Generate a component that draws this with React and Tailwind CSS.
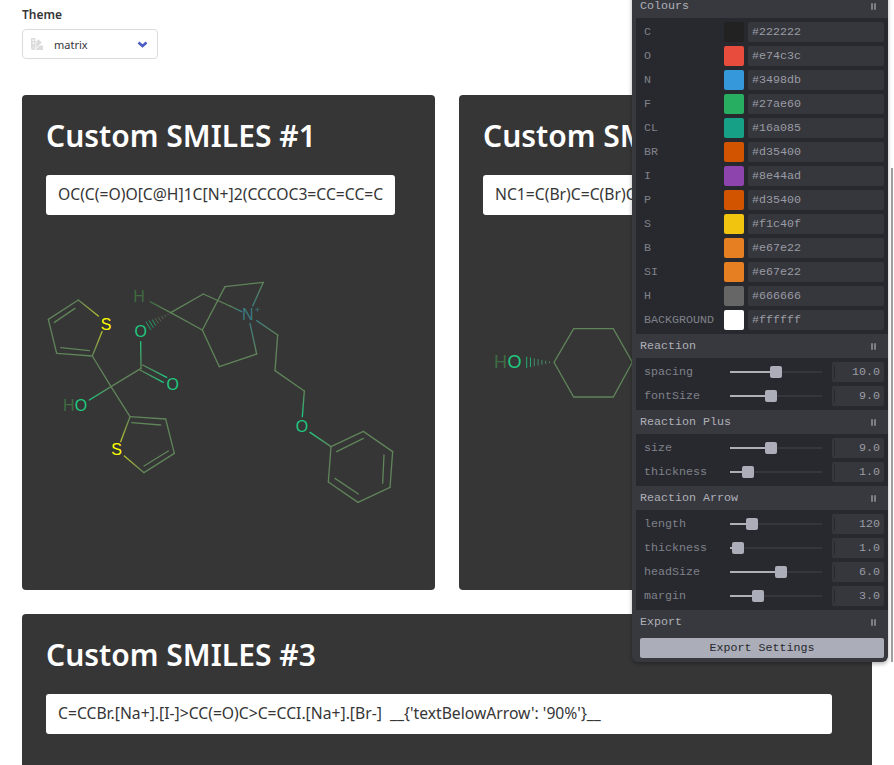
import { FaSwatchbook } from "react-icons/fa";

const sans = "font-['Noto_Sans','Open_Sans',sans-serif]";

const colours = [
  ["C", "#222222"],
  ["O", "#e74c3c"],
  ["N", "#3498db"],
  ["F", "#27ae60"],
  ["CL", "#16a085"],
  ["BR", "#d35400"],
  ["I", "#8e44ad"],
  ["P", "#d35400"],
  ["S", "#f1c40f"],
  ["B", "#e67e22"],
  ["SI", "#e67e22"],
  ["H", "#666666"],
  ["BACKGROUND", "#ffffff"],
];

const line = "#5f8459";
const oxy = "#1fc87f";
const sul = "#ffff00";
const nit = "#3c7a80";
const hyd = "#3f6b42";

// bond coordinates are in 3x picture units, the group below scales them down
function Bond({ id, d, from = line, to = line }) {
  if (from === to) return <line x1={d[0]} y1={d[1]} x2={d[2]} y2={d[3]} stroke={from} strokeWidth="4" strokeLinecap="round" />;
  return (
    <>
      <linearGradient id={id} gradientUnits="userSpaceOnUse" x1={d[0]} y1={d[1]} x2={d[2]} y2={d[3]}>
        <stop offset="0" stopColor={from} />
        <stop offset="1" stopColor={to} />
      </linearGradient>
      <line x1={d[0]} y1={d[1]} x2={d[2]} y2={d[3]} stroke={`url(#${id})`} strokeWidth="4" strokeLinecap="round" />
    </>
  );
}

function Atom({ x, y, fill, size = 48, children }) {
  return (
    <text x={x} y={y} fill={fill} fontSize={size} textAnchor="middle" dominantBaseline="central" fontFamily="'Liberation Sans', sans-serif">
      {children}
    </text>
  );
}

const plain = [
  [145, 90, 55, 148], [73, 157, 135, 115], [55, 148, 80, 250], [80, 250, 187, 258], [92, 233, 178, 242],
  [187, 258, 243, 350], [243, 350, 300, 440], [243, 350, 333, 295],
  [300, 440, 407, 447], [305, 458, 392, 465], [407, 447, 433, 550], [433, 550, 342, 608], [342, 588, 415, 543],
  [422, 128, 520, 72], [520, 72, 600, 108], [422, 128, 517, 180], [517, 180, 585, 50], [585, 50, 700, 37],
  [517, 180, 568, 290], [568, 290, 680, 252], [743, 195, 735, 302], [735, 302, 823, 363],
  [903, 530, 1000, 484], [920, 545, 1000, 505], [1000, 484, 1088, 545], [1088, 545, 1080, 652], [1062, 555, 1058, 640],
  [1080, 652, 984, 697], [984, 697, 895, 636], [915, 625, 985, 672], [895, 636, 903, 530],
];

const mixed = [
  [[187, 258, 216, 185], line, "#b5c030"],
  [[145, 90, 205, 138], line, "#b5c030"],
  [[300, 440, 272, 515], line, "#b5c030"],
  [[342, 608, 283, 558], line, "#b5c030"],
  [[243, 350, 178, 390], line, oxy],
  [[333, 295, 332, 215], line, oxy],
  [[338, 285, 410, 322], line, oxy],
  [[330, 300, 400, 337], line, oxy],
  [[422, 128, 360, 95], line, hyd],
  [[600, 108, 635, 125], line, nit],
  [[700, 37, 668, 108], line, nit],
  [[680, 252, 660, 160], line, nit],
  [[743, 195, 680, 152], line, nit],
  [[823, 363, 817, 440], line, oxy],
  [[903, 530, 840, 487], line, oxy],
];

function MoleculeOne() {
  return (
    <svg viewBox="46 255 365 310" className="mt-10 block h-[310px] w-[365px]">
      <g transform="translate(30 270) scale(0.33333)">
        {plain.map((d, i) => <Bond key={i} id={`p${i}`} d={d} />)}
        {mixed.map(([d, from, to], i) => <Bond key={i} id={`m${i}`} d={d} from={from} to={to} />)}
        {[0, 1, 2, 3, 4, 5, 6, 7].map((i) => {
          const x = 414 - i * 8.4;
          const y = 133 + i * 4.9;
          const h = 2 + i * 1.8;
          return <line key={i} x1={x - h * 0.5} y1={y - h * 0.85} x2={x + h * 0.5} y2={y + h * 0.85} stroke={i > 4 ? oxy : line} strokeWidth="2" />;
        })}
        <Atom x={228} y={163} fill={sul}>S</Atom>
        <Atom x={260} y={540} fill={sul}>S</Atom>
        <Atom x={332} y={186} fill={oxy}>O</Atom>
        <Atom x={428} y={345} fill={oxy}>O</Atom>
        <Atom x={116} y={408} fill={hyd}>H</Atom>
        <Atom x={153} y={408} fill={oxy}>O</Atom>
        <Atom x={327} y={81} fill={hyd}>H</Atom>
        <Atom x={653} y={135} fill={nit}>N</Atom>
        <Atom x={682} y={120} fill={nit} size={27}>+</Atom>
        <Atom x={816} y={470} fill={oxy}>O</Atom>
      </g>
    </svg>
  );
}

function MoleculeTwo() {
  return (
    <svg viewBox="483 255 365 310" className="mt-10 block h-[310px] w-[365px]">
      <path d="M554 362.3 573.7 328.7H613.3L632.3 362.3 613.3 397H573.7Z" fill="none" stroke={line} strokeWidth="1.3" />
      {[0, 1, 2, 3, 4, 5, 6].map((i) => {
        const x = 549.5 - i * 3.8;
        const h = 0.8 + i * 0.8;
        return <line key={i} x1={x} y1={362.3 - h} x2={x} y2={362.3 + h} stroke={i > 4 ? oxy : "#4aa070"} strokeWidth="0.8" />;
      })}
      <text x="494" y="368" fill={hyd} fontSize="18" fontFamily="'Liberation Sans', sans-serif">H</text>
      <text x="507.5" y="368" fill={oxy} fontSize="18" fontFamily="'Liberation Sans', sans-serif">O</text>
    </svg>
  );
}

function Card({ title, value, inputWidth, className, children }) {
  return (
    <div className={`rounded bg-[#363636] pl-6 pt-6 ${className}`}>
      <h1 className={`${sans} text-[30px] leading-[34px] font-semibold text-white`}>{title}</h1>
      <div className={`mt-[22px] flex h-10 items-center overflow-hidden rounded-[3px] bg-white pl-3 pr-3 ${inputWidth}`}>
        <span className={`${sans} text-[15.7px] whitespace-pre overflow-hidden w-full text-[#363636]`}>{value}</span>
      </div>
      {children}
    </div>
  );
}

function PaneHeader({ children }) {
  return (
    <div className="flex h-6 items-center justify-between bg-[#38393f] pl-2 pr-[12px] text-[#aeb0b8]">
      <span className="pt-[2px]">{children}</span>
      <span className="flex gap-px">
        <i className="block h-[7px] w-[2px] rounded-sm bg-[#7d7f87]" />
        <i className="block h-[7px] w-[2px] rounded-sm bg-[#7d7f87]" />
      </span>
    </div>
  );
}

function ColourRow({ name, hex }) {
  return (
    <div className="flex h-6 items-center pl-2 pr-1">
      <span className="w-[80px] pt-[2px] text-[#7f818a]">{name}</span>
      <span className="h-5 w-5 rounded-[2px]" style={{ backgroundColor: hex }} />
      <span className="ml-1 flex h-5 w-[136px] items-center rounded-[2px] bg-[#36373c] pl-[4px] pt-[2px] text-[#9a9ca5]">{hex}</span>
    </div>
  );
}

function SliderRow({ name, at, value }) {
  return (
    <div className="flex h-6 items-center pl-2 pr-1">
      <span className="w-[86px] pt-[2px] text-[#7f818a]">{name}</span>
      <div className="relative h-[2px] w-[92px] bg-[#36373c]">
        <div className="h-full bg-[#aeb0b8]" style={{ width: at - 730 }} />
        <div className="absolute top-[-5px] h-3 w-3 rounded-[2px] bg-[#abadb8]" style={{ left: at - 736 }} />
      </div>
      <div className="relative ml-[10px] flex h-5 w-[52px] items-center justify-end rounded-[2px] bg-[#36373c] pr-1 pt-[2px] text-[#9a9ca5]">
        <i className="absolute left-[2px] top-[3px] h-[14px] w-px bg-[#28292e]" />
        {value}
      </div>
    </div>
  );
}

function Pane() {
  return (
    <div className="absolute right-[6px] top-[-6px] w-[256px] overflow-hidden rounded-b-md bg-[#38393f] font-['Liberation_Mono',monospace] text-[11.67px] shadow-[0_2px_4px_rgba(0,0,0,0.3)]">
      <PaneHeader>Colours</PaneHeader>
      <div className="ml-1 bg-[#28292e] py-[2px]">
        {colours.map(([n, h]) => <ColourRow key={n} name={n} hex={h} />)}
      </div>
      <PaneHeader>Reaction</PaneHeader>
      <div className="ml-1 bg-[#28292e] py-[2px]">
        <SliderRow name="spacing" at={776} value="10.0" />
        <SliderRow name="fontSize" at={771} value="9.0" />
      </div>
      <PaneHeader>Reaction Plus</PaneHeader>
      <div className="ml-1 bg-[#28292e] py-[2px]">
        <SliderRow name="size" at={771} value="9.0" />
        <SliderRow name="thickness" at={748} value="1.0" />
      </div>
      <PaneHeader>Reaction Arrow</PaneHeader>
      <div className="ml-1 bg-[#28292e] py-[2px]">
        <SliderRow name="length" at={752} value="120" />
        <SliderRow name="thickness" at={738} value="1.0" />
        <SliderRow name="headSize" at={781} value="6.0" />
        <SliderRow name="margin" at={758} value="3.0" />
      </div>
      <PaneHeader>Export</PaneHeader>
      <div className="pb-1 pl-2 pr-1 pt-1">
        <div className="flex h-5 items-center justify-center rounded-[2px] bg-[#abadb8] pt-[2px] text-[#28292e]">Export Settings</div>
      </div>
    </div>
  );
}

export default function App() {
  return (
    <div className="relative h-screen overflow-hidden bg-white">
      <div className="pl-[22px] pr-[22px] pt-[7px]">
        <div className={`${sans} text-[12px] leading-4 font-semibold text-[#363636]`}>Theme</div>
        <div className="mt-[6px] flex h-[30px] w-[136px] items-center rounded-[4px] border border-[#dbdbdb] bg-white pl-2 pr-[9px]">
          <FaSwatchbook className="text-[12px] text-[#dbdbdb]" />
          <span className={`${sans} ml-[11px] flex-1 pt-[2px] text-[11px] text-[#363636]`}>matrix</span>
          <svg viewBox="0 0 11 7" className="h-[7px] w-[11px]">
            <path d="M1.5 1.5 5.5 5 9.5 1.5" fill="none" stroke="#4a5bc4" strokeWidth="2.6" />
          </svg>
        </div>
        <div className="mt-9 flex gap-6">
          <Card title="Custom SMILES #1" value="OC(C(=O)O[C@H]1C[N+]2(CCCOC3=CC=CC=C3)CCC1CC2)(C1=CC=CS1)C1=CC=CS1" inputWidth="w-[349px]" className="h-[495px] w-[413px]">
            <MoleculeOne />
          </Card>
          <Card title="Custom SMILES #2" value="NC1=C(Br)C=C(Br)C=C1CN[C@H]1CC[C@H](O)CC1" inputWidth="w-[349px]" className="h-[495px] w-[413px]">
            <MoleculeTwo />
          </Card>
        </div>
        <div className="mt-6">
          <Card title="Custom SMILES #3" value="C=CCBr.[Na+].[I-]>CC(=O)C>C=CCI.[Na+].[Br-]  __{'textBelowArrow': '90%'}__" inputWidth="w-[786px]" className="h-[300px] w-[850px]" />
        </div>
      </div>
      <div className="absolute right-px top-[168px] h-[494px] w-[2px] bg-[#a0a0a0]" />
      <Pane />
    </div>
  );
}
